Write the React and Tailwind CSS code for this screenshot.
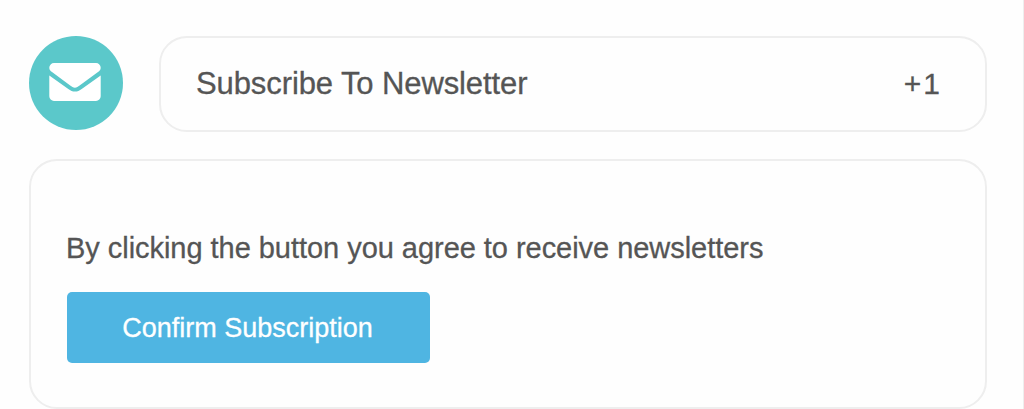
const EnvelopeIcon = () => (
  <svg width="52" height="38" viewBox="0 0 52 38" fill="currentColor">
    <path d="M5 0h42a4.7 4.7 0 0 1 4.7 4.7c0 2-1.2 3.3-2.7 4.4L30.600 22.600c-1.500 1.100-3 2.200-4.700 2.200s-3.200-1.100-4.700-2.200L3 9.100C1.500 8 .3 6.700 .3 4.700A4.700 4.700 0 0 1 5 0z" />
    <path d="M.3 12.600L19.300 25.900c2.100 1.600 4.300 2.700 6.700 2.700s4.600-1.100 6.700-2.700L51.700 12.600v20.700a4.700 4.700 0 0 1-4.700 4.700H5a4.700 4.700 0 0 1-4.700-4.700z" />
  </svg>
);

const App = () => {
  return (
    <div className="h-[409px] w-full overflow-hidden border-r border-[#eeeeee] bg-[#fefefe] pl-[29px] pr-9 pt-9 font-['Liberation_Sans',Arial,sans-serif] text-[#555555] antialiased [-webkit-text-stroke:0.3px]">
      <div className="flex gap-9">
        <div className="flex size-[94px] shrink-0 items-center justify-center rounded-full bg-[#5bc8ca] pb-0.5 pr-0.5 text-white">
          <EnvelopeIcon />
        </div>
        <div className="flex h-24 flex-1 items-center justify-between rounded-[28px] border-2 border-[#eeeeee] pl-[35px] pr-[43px] text-[31px] leading-9">
          <span className="tracking-[-0.1px]">Subscribe To Newsletter</span>
          <span className="text-[30px] tracking-[2px]">+1</span>
        </div>
      </div>

      <div className="mt-[27px] h-[250px] rounded-[28px] border-2 border-[#eeeeee] pl-9 pt-[69px]">
        <p className="-ml-px text-[29px] leading-9 tracking-[-0.04px]">
          By clicking the button you agree to receive newsletters
        </p>
        <button className="mt-[26px] h-[71px] w-[363px] rounded-[5px] bg-[#4fb5e2] pr-0.5 pt-0.5 text-[27px] text-white">
          Confirm Subscription
        </button>
      </div>
    </div>
  );
};

export default App;
